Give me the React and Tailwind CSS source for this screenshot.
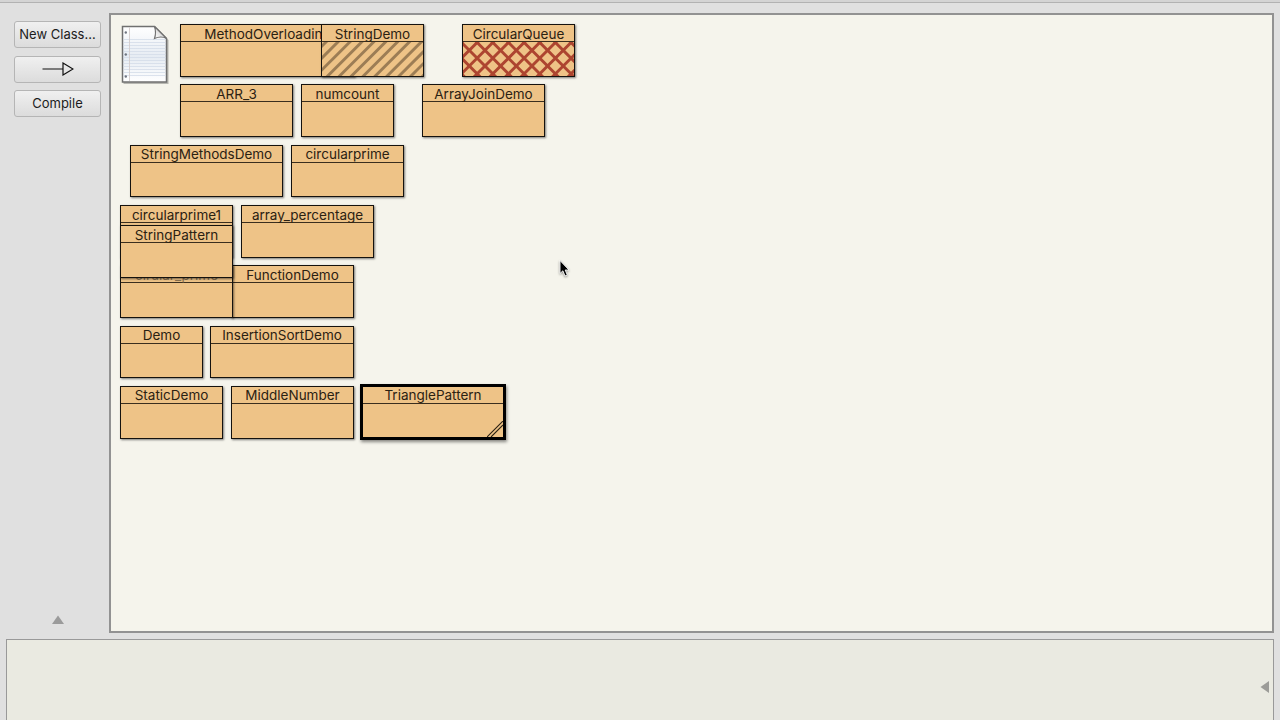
const classes = [
  { name: "MethodOverloading", x: 180, y: 24, w: 175 },
  { name: "StringDemo", x: 321, y: 24, w: 103, fill: "stripes" },
  { name: "CircularQueue", x: 462, y: 24, w: 113, fill: "hatch" },
  { name: "ARR_3", x: 180, y: 84, w: 113 },
  { name: "numcount", x: 301, y: 84, w: 93 },
  { name: "ArrayJoinDemo", x: 422, y: 84, w: 123 },
  { name: "StringMethodsDemo", x: 130, y: 145, w: 153, h: 52 },
  { name: "circularprime", x: 291, y: 145, w: 113, h: 52 },
  { name: "circularprime1", x: 120, y: 205, w: 113 },
  { name: "array_percentage", x: 241, y: 205, w: 133 },
  { name: "FunctionDemo", x: 231, y: 265, w: 123 },
  { name: "cirular_prime", x: 120, y: 265, w: 113, covered: true },
  { name: "StringPattern", x: 120, y: 225, w: 113 },
  { name: "Demo", x: 120, y: 326, w: 83, h: 52 },
  { name: "InsertionSortDemo", x: 210, y: 326, w: 144, h: 52 },
  { name: "StaticDemo", x: 120, y: 386, w: 103 , h: 53, high: true },
  { name: "MiddleNumber", x: 231, y: 386, w: 123, h: 53, high: true },
  { name: "TrianglePattern", x: 360, y: 384, w: 146, h: 56, selected: true },
];

function Stripes() {
  return (
    <svg className="block h-full w-full" aria-hidden="true">
      {[...Array(14)].map((_, i) => (
        <path
          key={i}
          d={`M${i * 11.9 - 32} 36 l38 -38`}
          stroke="#9c7d55"
          strokeWidth="2.9"
        />
      ))}
    </svg>
  );
}

function Hatch() {
  return (
    <svg className="block h-full w-full" aria-hidden="true">
      {[...Array(11)].map((_, i) => (
        <path
          key={i}
          d={`M${i * 15.65 - 37} 36 l38 -38 M${i * 15.65 - 35.3} -2 l38 38`}
          stroke="#ad4530"
          strokeWidth="2.9"
        />
      ))}
    </svg>
  );
}

function ClassBox({ item }) {
  // rows on the default height carry their label one pixel lower
  const tall = !item.h;

  return (
    <div
      className={
        item.selected
          ? "absolute flex flex-col border-3 border-black bg-[#eec387] shadow-[1px_2px_3px_rgba(0,0,0,0.45)]"
          : "absolute flex flex-col border border-[#15120e] bg-[#eec387] shadow-[1px_1px_2px_rgba(0,0,0,0.5)]"
      }
      style={{ left: item.x - 111, top: item.y - 15, width: item.w, height: item.h || 53 }}
    >
      <div
        className={`flex h-[17px] shrink-0 items-center justify-center border-b border-[#3a2e1e] text-[13.5px] leading-[17px] whitespace-nowrap ${
          tall ? "pt-[2px]" : ""
        } ${item.covered ? "text-[#8b7350]" : "text-[#2b2112]"}`}
      >
        {item.name}
      </div>
      <div className="min-h-0 flex-1 overflow-hidden">
        {item.fill === "stripes" && <Stripes />}
        {item.fill === "hatch" && <Hatch />}
      </div>
      {item.selected && (
        <svg className="absolute right-0 bottom-0 h-[16px] w-[16px]" aria-hidden="true">
          <path d="M0 16 L16 0 M4 16 L16 4" stroke="#2b2112" strokeWidth="1.1" />
        </svg>
      )}
    </div>
  );
}

function ReadmeIcon() {
  return (
    <svg
      className="absolute top-[9px] left-[8px] h-[64px] w-[54px]"
      viewBox="0 0 54 64"
      aria-hidden="true"
    >
      <defs>
        <linearGradient id="paper" x1="0" y1="0" x2="0" y2="1">
          <stop offset="0" stopColor="#ffffff" />
          <stop offset="0.55" stopColor="#e6ecf3" />
          <stop offset="1" stopColor="#ffffff" />
        </linearGradient>
        <linearGradient id="fold" x1="0" y1="1" x2="1" y2="0">
          <stop offset="0" stopColor="#ffffff" />
          <stop offset="1" stopColor="#b9b9b9" />
        </linearGradient>
      </defs>
      <path d="M4.5 4 H37 L49.5 16 V60 H4.5 Z" fill="#000" opacity="0.25" />
      <path d="M3.5 2.5 H35.5 L47.5 14.5 V58 H3.5 Z" fill="url(#paper)" stroke="#707070" strokeWidth="1.5" />
      {[...Array(13)].map((_, i) => (
        <path key={i} d={`M4.5 ${15.5 + i * 3} H46.5`} stroke="#d3dce8" strokeWidth="0.8" />
      ))}
      <path d="M10.5 3.5 V57" stroke="#d3cccc" strokeWidth="0.9" />
      {[8.5, 30.5, 52.5].map((y) => (
        <circle key={y} cx="6.8" cy={y} r="1.2" fill="#6f7580" />
      ))}
      <path
        d="M35.5 2.5 C37 7 37 10 35.5 14.5 C40 12.5 44 12.5 47.5 14.5 Z"
        fill="url(#fold)"
        stroke="#707070"
        strokeWidth="1.2"
      />
    </svg>
  );
}

function ToolButton({ children }) {
  return (
    <button className="flex h-[27px] w-[87px] items-center justify-center rounded-[3px] border border-[#b5b5b5] bg-linear-to-b from-[#f0f0f0] to-[#dcdcdc] pt-px text-[13px] whitespace-nowrap text-[#1c1c1c]">
      {children}
    </button>
  );
}

function App() {
  return (
    <div className="flex h-[720px] w-[1280px] flex-col overflow-hidden bg-[#e0e0e0] font-['Inter','Liberation_Sans',sans-serif]">
      <div className="h-[3px] shrink-0 border-b border-[#b2b2b2] bg-[#d4d4d4]" />

      <div className="flex h-[630px] shrink-0 pt-[10px] pr-[6px]">
        <div className="flex w-[109px] shrink-0 flex-col pt-[8px] pb-[9px] pl-[14px]">
          <div className="flex flex-col gap-[7.5px]">
            <ToolButton>New Class...</ToolButton>
            <ToolButton>
              <svg className="mb-[2px] h-[14px] w-[32px]" viewBox="0 0 32 14" fill="none" aria-hidden="true">
                <path d="M0.5 7 H21 M21 1 V13 L31 7 Z" stroke="#111" strokeWidth="1.2" />
              </svg>
            </ToolButton>
            <ToolButton>Compile</ToolButton>
          </div>
          <svg className="mt-auto ml-[38px] h-[9px] w-[12px]" viewBox="0 0 12 9" aria-hidden="true">
            <path d="M6 0.5 L12 9 H0 Z" fill="#9b9b9b" />
          </svg>
        </div>

        <div className="relative flex-1 border-2 border-[#929292] bg-[#f5f4ec]">
          <ReadmeIcon />
          {classes.map((item) => (
            <ClassBox key={item.name} item={item} />
          ))}
          <svg
            className="absolute top-[244px] left-[447px] h-[20px] w-[14px] drop-shadow-[0_1px_1px_rgba(0,0,0,0.4)]"
            viewBox="0 0 14 20"
            aria-hidden="true"
          >
            <path
              d="M2 1.5 V14.5 L4.9 11.8 L7 17 L9.3 16 L7.2 11 H11 Z"
              fill="#000"
              stroke="#fff"
              strokeWidth="0.9"
            />
          </svg>
        </div>
      </div>

      <div className="flex flex-1 pt-[6px] pr-[6px] pl-[6px]">
        <div className="flex flex-1 items-start justify-end border-x-[1.5px] border-t-[1.5px] border-[#999] bg-[#eaeae1] pt-[41px] pr-[4px]">
          <svg className="h-[12px] w-[9px]" viewBox="0 0 9 12" aria-hidden="true">
            <path d="M0.5 6 L9 0 V12 Z" fill="#9c9c98" />
          </svg>
        </div>
      </div>
    </div>
  );
}

export default App;
